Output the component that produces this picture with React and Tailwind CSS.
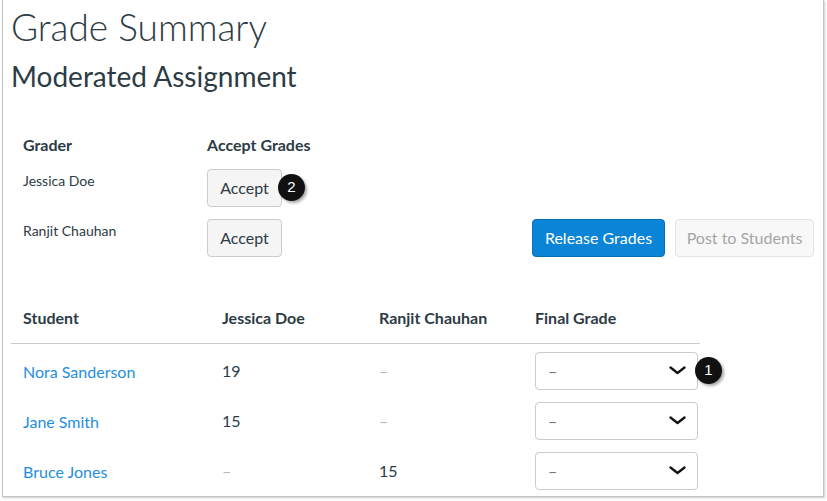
import React from 'react';

const graders = [
  { name: 'Jessica Doe', badge: '2' },
  { name: 'Ranjit Chauhan' },
];

const students = [
  { name: 'Nora Sanderson', jessica: '19', ranjit: null, badge: '1' },
  { name: 'Jane Smith', jessica: '15', ranjit: null },
  { name: 'Bruce Jones', jessica: null, ranjit: '15' },
];

function Badge({ n, className }) {
  return (
    <div
      className={`absolute w-[27px] h-[27px] rounded-full bg-[#111] text-white text-[15px] flex items-center justify-center shadow-[2px_2px_3px_rgba(0,0,0,0.35)] ${className}`}
      style={{ fontFamily: '"Liberation Sans", Arial, sans-serif' }}
    >
      {n}
    </div>
  );
}

function Chevron() {
  return (
    <svg width="17" height="9" viewBox="0 0 17 9" fill="none">
      <path d="M1.5 1.5 L8.5 7 L15.5 1.5" stroke="#111" strokeWidth="2.3" strokeLinecap="round" strokeLinejoin="round" />
    </svg>
  );
}

function Cell({ value }) {
  if (!value) return <span className="text-[#b4b9bd]">–</span>;
  return <span>{value}</span>;
}

export default function App() {
  return (
    <div className="w-[827px] h-[501px] bg-white overflow-hidden text-[#2d3b45]" style={{ fontFamily: 'Lato, "Open Sans", sans-serif' }}>
      <div className="ml-[2px] w-[822px] h-[497px] bg-white border-x border-b border-[#c4c4c4] shadow-[1px_1px_2px_rgba(0,0,0,0.2)]">
        <div className="pl-[8px] pt-[4px]">
          <h1 className="text-[37px] font-light leading-[46px]">Grade Summary</h1>
          <h2 className="text-[28px] leading-[40px] mt-[6px]">Moderated Assignment</h2>
        </div>

        <div className="flex justify-between pl-[20px] pr-[9px] mt-[37px]">
          <div>
            <div className="flex text-[16px] font-bold leading-[24px]">
              <div className="w-[184px]">Grader</div>
              <div>Accept Grades</div>
            </div>
            {graders.map((g) => (
              <div key={g.name} className="flex mt-[12px]">
                <div className="w-[184px] text-[14px] leading-[20px] pt-[2px]">{g.name}</div>
                <div className="relative">
                  <button className="h-[38px] w-[75px] rounded-[4px] border border-[#c7cdd1] bg-[#f5f5f5] text-[16px] text-[#2d3b45]">
                    Accept
                  </button>
                  {g.badge && <Badge n={g.badge} className="left-[71px] top-[5px]" />}
                </div>
              </div>
            ))}
          </div>
          <div className="flex gap-[10px] self-end">
            <button className="h-[38px] w-[133px] rounded-[4px] bg-[#0a84d6] border border-[#0670b8] text-white text-[16px]">
              Release Grades
            </button>
            <button className="h-[38px] w-[139px] rounded-[4px] bg-[#f8f8f8] border border-[#e4e4e4] text-[#a5a5a5] text-[16px]">
              Post to Students
            </button>
          </div>
        </div>

        <div className="ml-[8px] mt-[49px] w-[689px]">
          <div className="grid grid-cols-[199px_157px_156px_177px] text-[16px] font-bold leading-[24px] pb-[13px] border-b border-[#c7cdd1]">
            <div className="pl-[12px]">Student</div>
            <div className="pl-[12px]">Jessica Doe</div>
            <div className="pl-[12px]">Ranjit Chauhan</div>
            <div className="pl-[12px]">Final Grade</div>
          </div>
          {students.map((s) => (
            <div key={s.name} className="grid grid-cols-[199px_157px_156px_177px] items-center h-[50px] pt-[3px] text-[16px]">
              <div className="pl-[12px] text-[#1f8ee0] pt-[3px]">{s.name}</div>
              <div className="pl-[12px]"><Cell value={s.jessica} /></div>
              <div className="pl-[12px]"><Cell value={s.ranjit} /></div>
              <div className="pl-[12px] relative">
                <div className="h-[38px] w-[163px] rounded-[4px] border border-[#c7cdd1] bg-white flex items-center justify-between pl-[12px] pr-[11px]">
                  <span className="text-[#777]">–</span>
                  <Chevron />
                </div>
                {s.badge && <Badge n={s.badge} className="left-[172px] top-[5px]" />}
              </div>
            </div>
          ))}
        </div>
      </div>
    </div>
  );
}
